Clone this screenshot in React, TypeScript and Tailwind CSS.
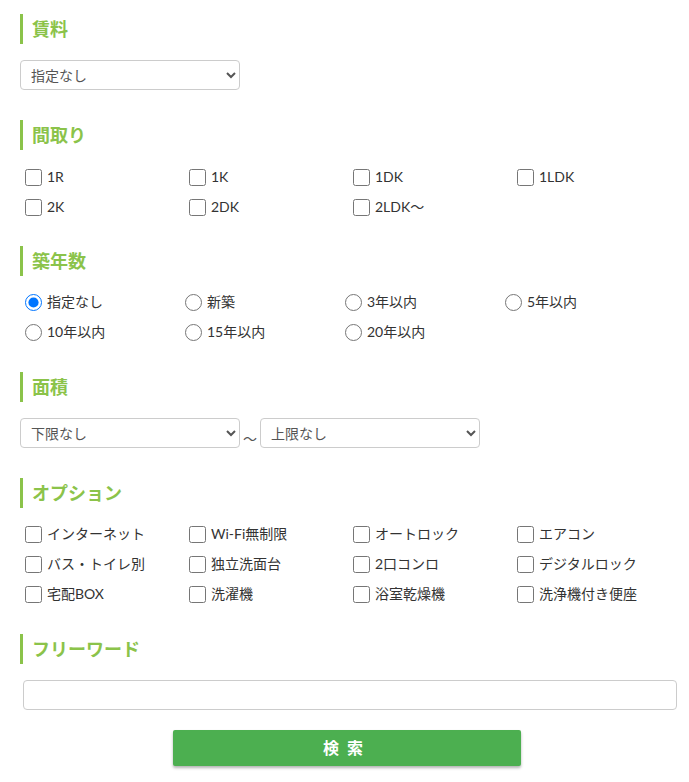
import React from "react";

const font = { fontFamily: "Lato, 'Noto Sans CJK JP', sans-serif" };

function Heading({ children }: { children: React.ReactNode }) {
  return (
    <div className="flex h-[30px] items-center border-l-[3px] border-[#8bc34a] pl-[9px]">
      <span className="text-[18px] font-bold leading-none text-[#8bc34a]">{children}</span>
    </div>
  );
}

function Check({ label }: { label: string }) {
  return (
    <label className="flex h-[30px] items-center pl-[5px]">
      <input type="checkbox" className="m-0 h-[17px] w-[17px]" />
      <span className="ml-[5px] pb-[2px] text-[14px] text-[#333]">{label}</span>
    </label>
  );
}

function Radio({ label, checked }: { label: string; checked?: boolean }) {
  return (
    <label className="flex h-[30px] items-center pl-[5px]">
      <input type="radio" name="age" defaultChecked={checked} className="m-0 h-[17px] w-[17px]" />
      <span className="ml-[5px] pb-[2px] text-[14px] text-[#333]">{label}</span>
    </label>
  );
}

function Select({ label }: { label: string }) {
  return (
    <select className="h-[30px] w-[220px] rounded-[4px] border border-[#ccc] bg-white pl-[6px] text-[14px] text-[#555]">
      <option>{label}</option>
    </select>
  );
}

export default function App() {
  const madori = ["1R", "1K", "1DK", "1LDK", "2K", "2DK", "2LDK～"];
  const ages = ["指定なし", "新築", "3年以内", "5年以内", "10年以内", "15年以内", "20年以内"];
  const options = [
    "インターネット",
    "Wi-Fi無制限",
    "オートロック",
    "エアコン",
    "バス・トイレ別",
    "独立洗面台",
    "2口コンロ",
    "デジタルロック",
    "宅配BOX",
    "洗濯機",
    "浴室乾燥機",
    "洗浄機付き便座",
  ];
  return (
    <div className="min-h-[782px] w-[689px] bg-white pl-[20px] pt-[14px]" style={font}>
      <div className="w-[656px]">
        <Heading>賃料</Heading>
        <div className="mt-[16px]">
          <Select label="指定なし" />
        </div>

        <div className="mt-[30px]">
          <Heading>間取り</Heading>
        </div>
        <div className="mt-[12px] grid grid-cols-[164px_164px_164px_164px]">
          {madori.map((m) => (
            <Check key={m} label={m} />
          ))}
        </div>

        <div className="mt-[24px]">
          <Heading>築年数</Heading>
        </div>
        <div className="mt-[11px] grid grid-cols-[160px_160px_160px_160px]">
          {ages.map((a, i) => (
            <Radio key={a} label={a} checked={i === 0} />
          ))}
        </div>

        <div className="mt-[25px]">
          <Heading>面積</Heading>
        </div>
        <div className="mt-[16px] flex items-end">
          <Select label="下限なし" />
          <span className="mx-[3px] pb-[2px] text-[14px] leading-none text-[#555]">～</span>
          <Select label="上限なし" />
        </div>

        <div className="mt-[30px]">
          <Heading>オプション</Heading>
        </div>
        <div className="mt-[11px] grid grid-cols-[164px_164px_164px_164px]">
          {options.map((o) => (
            <Check key={o} label={o} />
          ))}
        </div>

        <div className="mt-[25px]">
          <Heading>フリーワード</Heading>
        </div>
        <div className="mt-[16px] pl-[3px]">
          <input type="text" className="h-[30px] w-[654px] rounded-[4px] border border-[#ccc] bg-white px-[8px] text-[14px]" />
        </div>
        <div className="mt-[20px] flex pl-[153px]">
          <button className="h-[36px] w-[348px] rounded-[2px] bg-[#4caf50] text-[16px] font-bold tracking-[0.5em] text-white shadow-[0_2px_3px_rgba(0,0,0,0.3)]">
            検索
          </button>
        </div>
      </div>
    </div>
  );
}
